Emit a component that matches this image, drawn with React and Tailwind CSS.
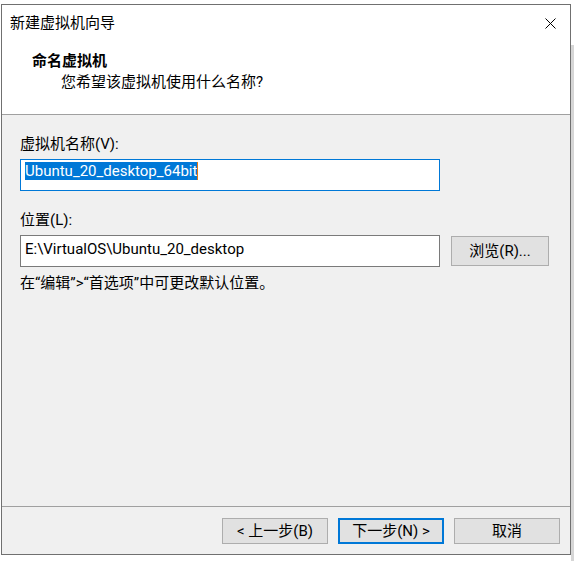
import React from 'react';

const font = { fontFamily: 'Roboto, "Noto Sans CJK SC", sans-serif' };

const Button = ({ children, primary }) => (
  <button
    className={
      primary
        ? 'w-[106px] h-[26px] bg-[#e1e1e1] border-2 border-[#0078d7] text-[15px] leading-none text-black'
        : 'w-[106px] h-[26px] bg-[#e1e1e1] border border-[#adadad] text-[15px] leading-none text-black'
    }
  >
    {children}
  </button>
);

export default function App() {
  return (
    <div className="relative w-[574px] h-[561px] bg-white overflow-hidden" style={font}>
      <div className="absolute right-0 top-[45px] bottom-0 w-[3px] bg-[#d6d6d6]" />
      <div className="pt-[4px] pl-[1px]">
        <div className="w-[570px] h-[551px] border border-[#707070] flex flex-col bg-[#f0f0f0]">
          {/* title bar */}
          <div className="h-[31px] bg-white flex items-center justify-between pl-[8px] pr-[14px] pt-[5px]">
            <span className="text-[15px] text-black leading-none">新建虚拟机向导</span>
            <svg width="11" height="11" viewBox="0 0 11 11">
              <path d="M0.5 0.5 L10.5 10.5 M10.5 0.5 L0.5 10.5" stroke="#000" strokeWidth="1" />
            </svg>
          </div>
          {/* header */}
          <div className="h-[79px] bg-white border-b border-[#a0a0a0] flex flex-col pt-[15px]">
            <div className="pl-[30px] text-[15px] font-bold leading-[20px] text-black">命名虚拟机</div>
            <div className="pl-[59px] mt-[1px] text-[15px] leading-[20px] text-black">您希望该虚拟机使用什么名称?</div>
          </div>
          {/* body */}
          <div className="flex-1 flex flex-col pl-[18px] pt-[19px] border-b border-[#a0a0a0]">
            <div className="text-[15px] leading-[20px] text-black">虚拟机名称(V):</div>
            <div className="mt-[5px] w-[420px] h-[32px] bg-white border border-[#0078d7] pl-[4px] pt-[2px] flex items-start">
              <span className="bg-[#0078d7] text-white text-[15px] leading-[18px]">Ubuntu_20_desktop_64bit</span>
              <span className="w-[1px] h-[18px] bg-[#e8760c]" />
            </div>
            <div className="mt-[19px] text-[15px] leading-[20px] text-black">位置(L):</div>
            <div className="mt-[5px] flex items-start gap-[11px]">
              <div className="w-[420px] h-[32px] bg-white border border-[#7a7a7a] pl-[4px] pt-[3px] text-[15px] leading-[20px] text-black">
                E:\VirtualOS\Ubuntu_20_desktop
              </div>
              <button className="mt-[1px] w-[98px] h-[30px] bg-[#e1e1e1] border border-[#adadad] text-[15px] leading-none text-black">
                浏览(R)...
              </button>
            </div>
            <div className="mt-[6px] text-[15px] leading-[20px] text-black">在“编辑”&gt;“首选项”中可更改默认位置。</div>
          </div>
          {/* footer */}
          <div className="h-[47px] flex justify-end items-start gap-[10px] pt-[11px] pr-[10px]">
            <Button>&lt; 上一步(B)</Button>
            <Button primary>下一步(N) &gt;</Button>
            <Button>取消</Button>
          </div>
        </div>
      </div>
    </div>
  );
}
